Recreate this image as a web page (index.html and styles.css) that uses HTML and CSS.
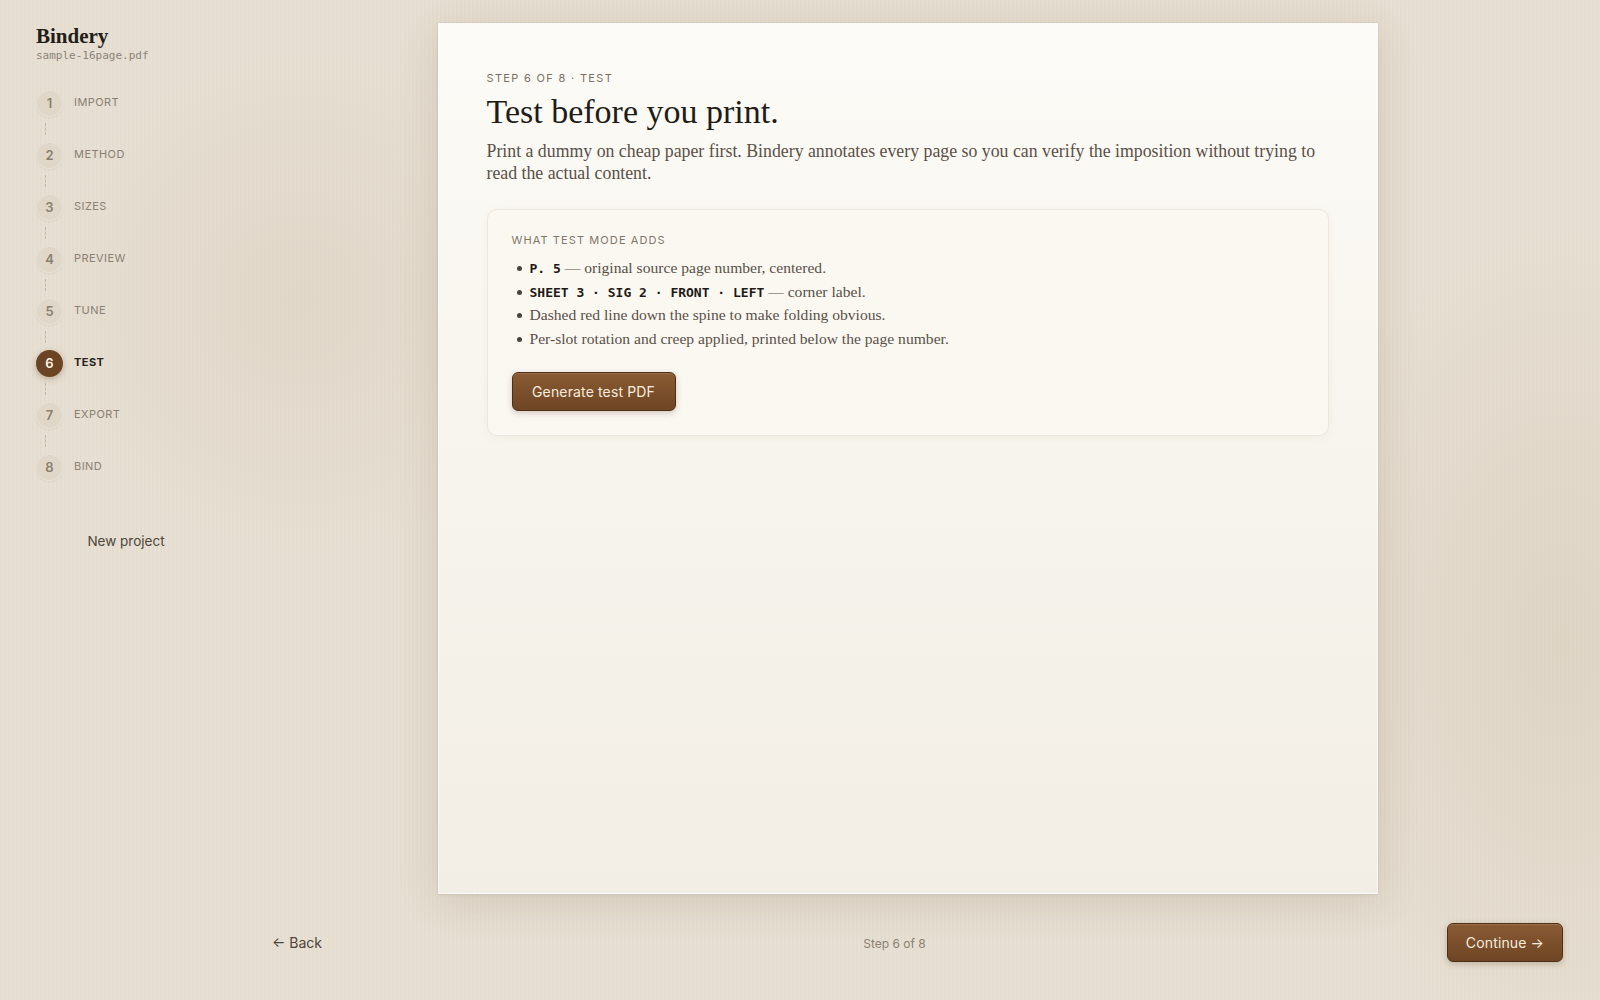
FILE: index.html
```html
<!DOCTYPE html>
<html lang="en">
<head>
    <meta charset="UTF-8">
    <title>Bindery - Test</title>
    <link rel="stylesheet" href="styles.css">
</head>
<body>
    <aside class="sidebar">
        <div class="brand">Bindery</div>
        <div class="file">sample-16page.pdf</div>
        <ol class="steps">
            <li class="step"><span class="num">1</span><span class="label">Import</span></li>
            <li class="link"></li>
            <li class="step"><span class="num">2</span><span class="label">Method</span></li>
            <li class="link"></li>
            <li class="step"><span class="num">3</span><span class="label">Sizes</span></li>
            <li class="link"></li>
            <li class="step"><span class="num">4</span><span class="label">Preview</span></li>
            <li class="link"></li>
            <li class="step"><span class="num">5</span><span class="label">Tune</span></li>
            <li class="link"></li>
            <li class="step active"><span class="num">6</span><span class="label">Test</span></li>
            <li class="link"></li>
            <li class="step"><span class="num">7</span><span class="label">Export</span></li>
            <li class="link"></li>
            <li class="step"><span class="num">8</span><span class="label">Bind</span></li>
        </ol>
        <button class="new-project">New project</button>
    </aside>

    <main class="main">
        <section class="sheet">
            <div class="eyebrow">Step 6 of 8 · Test</div>
            <h1>Test before you print.</h1>
            <p class="lead">Print a dummy on cheap paper first. Bindery annotates every page so you can verify the imposition without trying to read the actual content.</p>

            <div class="panel">
                <div class="panel-title">What test mode adds</div>
                <ul class="adds">
                    <li><code>P. 5</code> — original source page number, centered.</li>
                    <li><code>SHEET 3 · SIG 2 · FRONT · LEFT</code> — corner label.</li>
                    <li>Dashed red line down the spine to make folding obvious.</li>
                    <li>Per-slot rotation and creep applied, printed below the page number.</li>
                </ul>
                <button class="btn">Generate test PDF</button>
            </div>
        </section>

        <footer class="footer">
            <button class="back">← Back</button>
            <span class="count">Step 6 of 8</span>
            <button class="btn continue">Continue →</button>
        </footer>
    </main>
</body>
</html>
```

FILE: styles.css
```css
html,body,div,p,h1,ol,ul,li{margin:0;padding:0;}
ol,ul{list-style-type:none;}
button{font:inherit;cursor:pointer;}

body{
    display:flex;
    height:1000px;
    overflow:hidden;
    font:14px/1.4 Inter, "Liberation Sans", sans-serif;
    color:#2a2420;
    background-color:#e7dfd2;
    background-image:
        repeating-linear-gradient(90deg, rgba(120,95,60,.018) 0 2px, rgba(255,255,255,.018) 2px 4px),
        radial-gradient(ellipse 260px 420px at 1560px 640px, rgba(150,120,85,.10), transparent),
        radial-gradient(ellipse 260px 260px at 300px 300px, rgba(150,120,85,.07), transparent);
}

/* sidebar */
.sidebar{width:252px;flex:none;padding:25px 36px 0;box-sizing:border-box;}
.brand{font:700 21px/23px "Liberation Serif", serif;color:#231d18;}
.file{font:11px/14px "DejaVu Sans Mono", monospace;color:#8c8478;margin-top:1px;}

.steps{margin-top:26px;}
.step{display:flex;align-items:center;height:28px;}
.step .num{
    width:27px;height:27px;border-radius:50%;
    display:flex;align-items:center;justify-content:center;
    background:#e0d7c9;
    box-shadow:inset 0 0 0 1px rgba(255,255,255,.25), 0 1px 2px rgba(120,95,60,.08);
    font-size:13px;font-weight:600;color:#8b806f;
}
.step .label{margin-left:11px;font-size:11px;letter-spacing:.04em;text-transform:uppercase;color:#8a8073;}
.step.active .num{background:#6b4424;color:#fbf3e8;box-shadow:0 2px 6px rgba(107,68,36,.35);}
.step.active .label{color:#2a2420;font-weight:700;}
.link{height:12px;margin:6px 0 6px 9px;border-left:1px dashed #c6b9a6;}

.new-project{
    display:block;width:100%;margin-top:43px;padding:8px 0;
    border:0;background:none;color:#4e453c;font-size:13.5px;text-align:center;
}

/* main */
.main{flex:1;padding:23px 37px 0 0;display:flex;flex-direction:column;}
.sheet{
    width:940px;height:871px;box-sizing:border-box;margin:0 auto;
    padding:45px 48px;
    border:1px solid rgba(255,255,255,.6);
    background:linear-gradient(180deg,#fcfbf7 0%,#f8f5ee 45%,#f2eee5 100%);
    box-shadow:0 0 0 1px rgba(140,115,85,.06), 0 8px 40px rgba(90,65,35,.14), 0 1px 3px rgba(90,65,35,.08);
}
.eyebrow{font-size:11px;line-height:14px;letter-spacing:.12em;text-transform:uppercase;color:#7a7064;margin-top:2px;}
h1{font:400 34px/44px "Liberation Serif", serif;color:#221c17;margin-top:5px;}
.lead{font:17.8px/22px "Liberation Serif", serif;color:#5a5048;margin-top:6px;}

.panel{
    margin-top:25px;padding:23px 24px 24px;
    background:#fbf8f2;border:1px solid #ede7dd;border-radius:10px;
    box-shadow:0 2px 8px rgba(120,95,60,.06);
}
.panel-title{font-size:11px;line-height:14px;letter-spacing:.1em;text-transform:uppercase;color:#80776b;}
.adds{margin-top:9px;}
.adds li{position:relative;padding-left:18px;font:15.6px/23.5px "Liberation Serif", serif;color:#5a5048;}
.adds li::before{content:"";position:absolute;left:5px;top:10px;width:5px;height:5px;border-radius:50%;background:#4a423b;}
.adds code{font:700 13px "DejaVu Sans Mono", monospace;color:#1f1a16;}

.btn{
    height:39px;padding:0 18px;border-radius:6px;
    border:1px solid #4e3018;
    background:linear-gradient(180deg,#8a5b34 0%,#6e4524 100%);
    color:#f6ecdd;font-size:14px;letter-spacing:.01em;
    box-shadow:inset 0 1px 0 rgba(255,255,255,.12), 0 2px 6px rgba(80,50,20,.25);
}
.panel .btn{margin-top:22px;width:164px;}

/* footer */
.footer{display:flex;justify-content:space-between;align-items:center;margin-top:29px;}
.back{padding:8px 20px;border:0;background:none;color:#4e453c;font-size:14px;}
.count{font-size:12px;color:#8a8073;margin-top:4px;}
.continue{width:116px;padding:0;}
```
